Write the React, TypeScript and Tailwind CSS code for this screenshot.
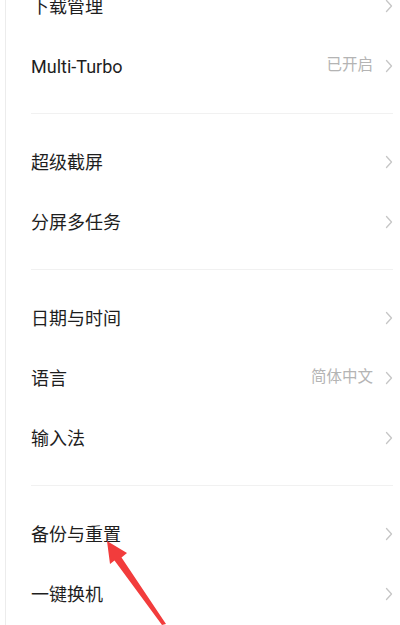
import React from "react";

type Row = { label: string; value?: string };

const sections: Row[][] = [
  [{ label: "下载管理" }, { label: "Multi-Turbo", value: "已开启" }],
  [{ label: "超级截屏" }, { label: "分屏多任务" }],
  [{ label: "日期与时间" }, { label: "语言", value: "简体中文" }, { label: "输入法" }],
  [{ label: "备份与重置" }, { label: "一键换机" }],
];

function Chevron() {
  return (
    <svg width="8" height="14" viewBox="0 0 8 14" className="shrink-0">
      <path d="M1.5 1.5 L6.5 7 L1.5 12.5" fill="none" stroke="#c6c6c6" strokeWidth="1.3" strokeLinecap="round" strokeLinejoin="round" />
    </svg>
  );
}

function Item({ row }: { row: Row }) {
  return (
    <div className="flex h-[60px] items-center justify-between pl-[25px] pr-[7px]">
      <span className="text-[18px] text-[#1e1e1e]">{row.label}</span>
      <div className="flex items-center gap-[12px]">
        {row.value && <span className="text-[15.5px] text-[#b4b4b4]">{row.value}</span>}
        <Chevron />
      </div>
    </div>
  );
}

export default function App() {
  return (
    <div
      className="relative h-[625px] w-[400px] overflow-hidden bg-white"
      style={{ fontFamily: 'Roboto, "Noto Sans CJK SC", sans-serif' }}
    >
      <div className="ml-[5px] flex h-full flex-col border-l border-[#ececec]">
        <div className="-mt-[24px]">
          {sections.map((sec, i) => (
            <div key={i}>
              {i > 0 && (
                <div className="pt-[17px] pb-[18px] pl-[25px] pr-[7px]">
                  <div className="h-px bg-[#f1f1f1]" />
                </div>
              )}
              {sec.map((r) => (
                <Item key={r.label} row={r} />
              ))}
            </div>
          ))}
        </div>
      </div>
      <svg className="absolute left-0 top-0" width="400" height="625" viewBox="0 0 400 625">
        <polygon
          points="107,541 127,553 121.5,557.5 166,624 162,625 114.5,560.5 110,564"
          fill="#f23c3c"
        />
      </svg>
    </div>
  );
}
